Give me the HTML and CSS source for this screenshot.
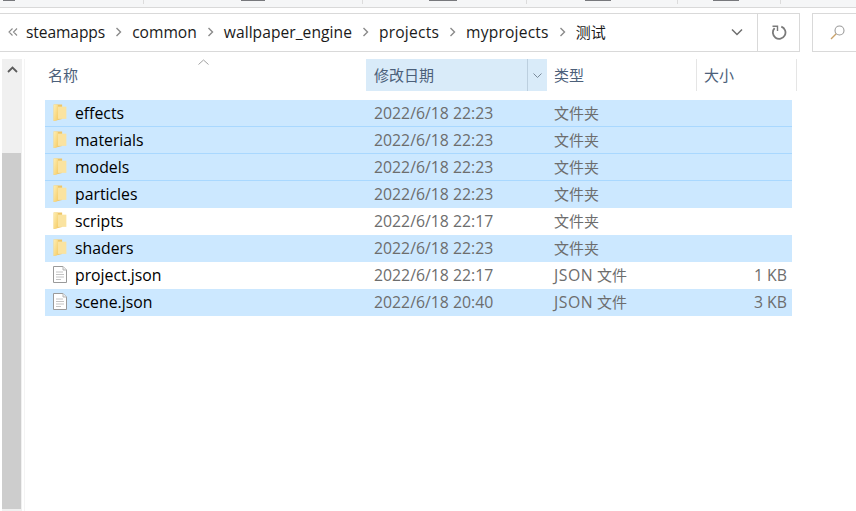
FILE: index.html
```html
<!DOCTYPE html>
<html lang="zh">
<head>
<meta charset="utf-8">
<title>测试</title>
<link rel="stylesheet" href="styles.css">
</head>
<body>
<svg class="defs" width="0" height="0" aria-hidden="true">
  <defs>
    <linearGradient id="fold" x1="0" y1="0" x2="1" y2="1">
      <stop offset="0" stop-color="#fdeeb4"/>
      <stop offset="1" stop-color="#f6cd68"/>
    </linearGradient>
    <symbol id="folder" viewBox="0 0 12 16">
      <path d="M0 .5H8V14L0 16Z" fill="#efc568"/>
      <path d="M4 2.500H12V14H4Z" fill="#fae3a0"/>
      <path d="M0 .5H4V15L0 16Z" fill="url(#fold)"/>
    </symbol>
    <symbol id="file" viewBox="0 0 14 17">
      <path d="M.5 .5H10L13.500 4V16.500H.5Z" fill="#fff" stroke="#9a9a9a"/>
      <path d="M10 .5V4H13.500" fill="#eee" stroke="#b5b5b5"/>
      <path d="M3 6H10M3 8.500H11M3 11H11M3 13.500H8" stroke="#c4c4c4"/>
    </symbol>
  </defs>
</svg>
<div class="ribbon">
  <span class="bit b0"></span><span class="tick t1"></span><span class="bit b1"></span><span class="tick t2"></span><span class="bit b2"></span><span class="tick t3"></span><span class="bit b3"></span><span class="tick t4"></span><span class="bit b4"></span><span class="tick t5"></span>
</div>
<div class="toolbar">
  <div class="address">
    <svg class="chev-double" width="10" height="8" viewBox="0 0 10 8"><path d="M4.500 .5 1 4l3.500 3.500M9 .5 5.500 4 9 7.500" fill="none" stroke="#8a8a8a" stroke-width="1.100"/></svg>
    <span class="crumb tight">steamapps</span>
    <svg class="sep" width="7" height="10" viewBox="0 0 7 10"><path d="M1.500 1 5.500 5 1.500 9" fill="none" stroke="#8a8a8a" stroke-width="1.400"/></svg>
    <span class="crumb">common</span>
    <svg class="sep" width="7" height="10" viewBox="0 0 7 10"><path d="M1.500 1 5.500 5 1.500 9" fill="none" stroke="#8a8a8a" stroke-width="1.400"/></svg>
    <span class="crumb slight">wallpaper_engine</span>
    <svg class="sep" width="7" height="10" viewBox="0 0 7 10"><path d="M1.500 1 5.500 5 1.500 9" fill="none" stroke="#8a8a8a" stroke-width="1.400"/></svg>
    <span class="crumb wide">projects</span>
    <svg class="sep" width="7" height="10" viewBox="0 0 7 10"><path d="M1.500 1 5.500 5 1.500 9" fill="none" stroke="#8a8a8a" stroke-width="1.400"/></svg>
    <span class="crumb wide">myprojects</span>
    <svg class="sep" width="7" height="10" viewBox="0 0 7 10"><path d="M1.500 1 5.500 5 1.500 9" fill="none" stroke="#8a8a8a" stroke-width="1.400"/></svg>
    <span class="crumb cjk">测试</span>
    <svg class="drop" width="12" height="8" viewBox="0 0 12 8"><path d="M1 1.500 6 6.500 11 1.500" fill="none" stroke="#6e6e6e" stroke-width="1.500"/></svg>
    <button class="refresh" aria-label="刷新"><svg width="16" height="16" viewBox="0 0 16 16"><path d="M10.300 1.600A6.300 6.300 0 1 1 3.600 3.200" fill="none" stroke="#7a7a7a" stroke-width="1.800"/><path d="M1.500 1.200 6.500 1.200 6.500 6" fill="none" stroke="#7a7a7a" stroke-width="1.400"/></svg></button>
  </div>
  <div class="search"><svg width="15" height="15" viewBox="0 0 15 15"><circle cx="9.500" cy="5.500" r="4.500" fill="none" stroke="#9a9a9a" stroke-width="1.100"/><path d="M6.200 8.800 1 14" stroke="#c9a26a" stroke-width="1.300"/></svg></div>
</div>
<div class="main">
  <div class="scrollbar">
    <div class="arrow"><svg width="11" height="7" viewBox="0 0 11 7"><path d="M1 6 5.500 1.500 10 6" fill="none" stroke="#5c5c5c" stroke-width="1.800"/></svg></div>
    <div class="thumb"></div>
  </div>
  <div class="pane">
    <div class="header">
      <div class="col name"><span>名称</span><svg class="sort" width="11" height="6" viewBox="0 0 11 6"><path d="M.5 5.500 5.500 1 10.500 5.500" fill="none" stroke="#a0a0a0"/></svg></div>
      <div class="col date active"><span>修改日期</span><span class="split"><svg width="9" height="5" viewBox="0 0 9 5"><path d="M.5 .5 4.500 4.500 8.500 .5" fill="none" stroke="#7a8a9a"/></svg></span></div>
      <div class="col type"><span>类型</span></div>
      <div class="col size"><span>大小</span></div>
    </div>
    <div class="rows">
      <div class="row sel focus"><div class="cell name"><svg class="ico"><use href="#folder"/></svg>effects</div><div class="cell date">2022/6/18 22:23</div><div class="cell type">文件夹</div><div class="cell size"></div></div>
      <div class="row sel"><div class="cell name"><svg class="ico"><use href="#folder"/></svg>materials</div><div class="cell date">2022/6/18 22:23</div><div class="cell type">文件夹</div><div class="cell size"></div></div>
      <div class="row sel"><div class="cell name"><svg class="ico"><use href="#folder"/></svg>models</div><div class="cell date">2022/6/18 22:23</div><div class="cell type">文件夹</div><div class="cell size"></div></div>
      <div class="row sel"><div class="cell name"><svg class="ico"><use href="#folder"/></svg>particles</div><div class="cell date">2022/6/18 22:23</div><div class="cell type">文件夹</div><div class="cell size"></div></div>
      <div class="row"><div class="cell name"><svg class="ico"><use href="#folder"/></svg>scripts</div><div class="cell date">2022/6/18 22:17</div><div class="cell type">文件夹</div><div class="cell size"></div></div>
      <div class="row sel"><div class="cell name"><svg class="ico"><use href="#folder"/></svg>shaders</div><div class="cell date">2022/6/18 22:23</div><div class="cell type">文件夹</div><div class="cell size"></div></div>
      <div class="row"><div class="cell name"><svg class="ico"><use href="#file"/></svg>project.json</div><div class="cell date">2022/6/18 22:17</div><div class="cell type"><span class="lat">JSON</span> 文件</div><div class="cell size">1 KB</div></div>
      <div class="row sel"><div class="cell name"><svg class="ico"><use href="#file"/></svg>scene.json</div><div class="cell date">2022/6/18 20:40</div><div class="cell type"><span class="lat">JSON</span> 文件</div><div class="cell size">3 KB</div></div>
    </div>
  </div>
</div>
</body>
</html>
```
FILE: styles.css
```css
* { box-sizing: border-box; }
html, body { margin: 0; height: 100%; }
body {
  width: 856px;
  height: 511px;
  overflow: hidden;
  background: #fff;
  font-family: "Open Sans", "Noto Sans CJK SC", sans-serif;
  font-size: 15.8px;
  display: flex;
  flex-direction: column;
}
.defs { position: absolute; }
.ribbon {
  height: 8px;
  background: #f5f6f7;
  border-bottom: 1px solid #d9d9d9;
  display: flex;
  flex: none;
}
.tick { width: 1px; height: 4px; background: #dcdcdc; }
.bit { height: 1px; background: #77787c; }
.b0 { width: 12px; margin-left: 3px; }
.b1 { width: 24px; margin-left: 97px; }
.b2 { width: 28px; margin-left: 66px; }
.b3 { width: 26px; margin-left: 58px; }
.b4 { width: 26px; margin-left: 35px; }
.t1 { margin-left: 128px; }
.t2 { margin-left: 97px; }
.t3 { margin-left: 69px; }
.t4 { margin-left: 66px; }
.t5 { margin-left: 41px; }
.toolbar {
  flex: none;
  margin-top: 5px;
  height: 39px;
  display: flex;
  gap: 12px;
}
.address {
  width: 800px;
  border: 1px solid #d9d9d9;
  border-left: 0;
  display: flex;
  align-items: center;
  padding: 0 0 2px 8px;
  color: #1a1a1a;
  font-size: 15.6px;
}
.chev-double { margin-right: 8px; }
.crumb { white-space: nowrap; }
.tight { letter-spacing: -.1px; }
.slight { letter-spacing: .05px; }
.wide { letter-spacing: .2px; }
.cjk { font-size: 15px; }
.sep { margin: 0 10px; }
.drop { margin-left: auto; margin-right: 14px; }
.refresh {
  width: 42px;
  height: 37px;
  margin-bottom: -2px;
  padding: 0;
  border: 0;
  border-left: 1px solid #d9d9d9;
  background: #fff;
  display: flex;
  align-items: center;
  justify-content: center;
}
.search {
  flex: 1;
  border: 1px solid #d9d9d9;
  border-right: 0;
  display: flex;
  align-items: center;
  padding-left: 17px;
}
.main {
  flex: 1;
  display: flex;
  margin-top: 7px;
  min-height: 0;
}
.scrollbar {
  width: 20px;
  margin-left: 2px;
  background: #f0f0f0;
  padding-bottom: 2px;
  display: flex;
  flex-direction: column;
  flex: none;
}
.arrow {
  height: 94px;
  padding: 7px 0 0 1px;
  display: flex;
  justify-content: center;
  align-items: flex-start;
}
.thumb { flex: 1; width: 19px; background: #cdcdcd; }
.pane {
  flex: 1;
  margin-left: 2px;
  padding-left: 20px;
  border-left: 1px solid #f4f4f4;
  min-width: 0;
}
.header {
  display: flex;
  height: 32px;
  color: #4c607a;
  font-size: 15px;
}
.col {
  display: flex;
  align-items: center;
  padding: 0 0 2px 8px;
  border-right: 1px solid #e5e5e5;
  position: relative;
}
.col.name { width: 321px; padding-left: 3px; border-right: 0; }
.col.date { width: 181px; background: #d9ebf9; border-right: 0; justify-content: space-between; }
.split { width: 20px; height: 32px; margin-bottom: -2px; border-left: 1px solid #bccfdf; display: flex; align-items: center; justify-content: center; }
.col.type { width: 150px; padding-left: 7px; }
.col.size { width: 100px; padding-left: 7px; }
.sort { position: absolute; left: 153px; top: 0; }
.rows { margin-top: 9px; width: 747px; }
.row {
  display: flex;
  height: 27px;
  padding-bottom: 2px;
  align-items: center;
  color: #6d6d6d;
}
.row.sel { background: #cce8ff; }
.row.sel:has(+ .sel) { box-shadow: inset 0 -1px 0 #a9d8ff; }
.row.focus { box-shadow: 0 -1px 0 #99d1ff, inset 1px 0 0 #99d1ff, inset -1px 0 0 #99d1ff, inset 0 -1px 0 #82c5ff; }
.cell { white-space: nowrap; }
.cell.name { width: 321px; display: flex; align-items: center; padding-left: 8px; color: #000; }
.cell.date { width: 188px; padding-left: 8px; }
.cell.type { width: 142px; font-size: 15px; }
.lat { font-size: 15.8px; letter-spacing: .5px; }
.cell.size { width: 96px; text-align: right; padding-right: 5px; }
.ico { width: 14px; height: 17px; margin-right: 8px; flex: none; margin-top: -1px; }
```
